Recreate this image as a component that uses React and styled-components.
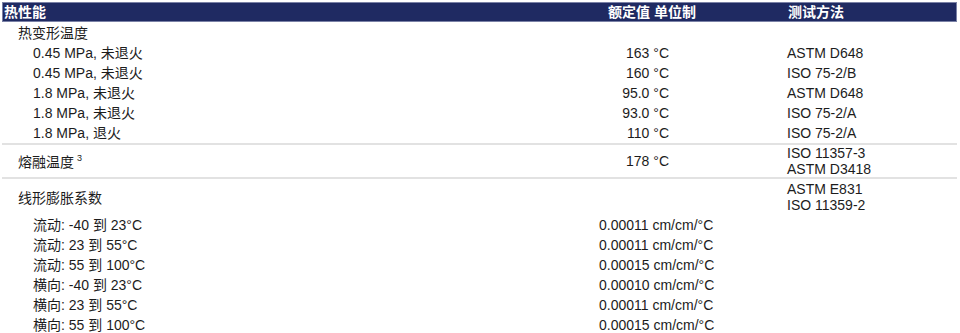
import React from 'react';
import styled, { createGlobalStyle } from 'styled-components';

const GlobalStyle = createGlobalStyle`
  body {
    margin: 0;
    background: #ffffff;
  }
`;

const heatRows = [
  { label: '0.45 MPa, 未退火', value: '163 °C', method: 'ASTM D648' },
  { label: '0.45 MPa, 未退火', value: '160 °C', method: 'ISO 75-2/B' },
  { label: '1.8 MPa, 未退火', value: '95.0 °C', method: 'ASTM D648' },
  { label: '1.8 MPa, 未退火', value: '93.0 °C', method: 'ISO 75-2/A' },
  { label: '1.8 MPa, 退火', value: '110 °C', method: 'ISO 75-2/A' },
];

const cteRows = [
  { label: '流动: -40 到 23°C', value: '0.00011 cm/cm/°C' },
  { label: '流动: 23 到 55°C', value: '0.00011 cm/cm/°C' },
  { label: '流动: 55 到 100°C', value: '0.00015 cm/cm/°C' },
  { label: '横向: -40 到 23°C', value: '0.00010 cm/cm/°C' },
  { label: '横向: 23 到 55°C', value: '0.00011 cm/cm/°C' },
  { label: '横向: 55 到 100°C', value: '0.00015 cm/cm/°C' },
];

function App() {
  return (
    <>
      <GlobalStyle />
      <Table>
        <HeaderRow>
          <HeadCell>热性能</HeadCell>
          <HeadCell $pad="10px">额定值 单位制</HeadCell>
          <HeadCell>测试方法</HeadCell>
        </HeaderRow>

        <Section>
          <Row>
            <Label $indent={16}>热变形温度</Label>
            <Value />
            <Method />
          </Row>
          {heatRows.map((r, i) => (
            <Row key={i}>
              <Label $indent={31}>{r.label}</Label>
              <Value $align="right">{r.value}</Value>
              <Method>{r.method}</Method>
            </Row>
          ))}
        </Section>

        <Section>
          <BlockRow>
            <Label $indent={16}>
              熔融温度<Sup>3</Sup>
            </Label>
            <Value $align="right">178 °C</Value>
            <MethodList>
              <span>ISO 11357-3</span>
              <span>ASTM D3418</span>
            </MethodList>
          </BlockRow>
        </Section>

        <Section $last>
          <BlockRow $height={36}>
            <Label $indent={16}>线形膨胀系数</Label>
            <Value />
            <MethodList>
              <span>ASTM E831</span>
              <span>ISO 11359-2</span>
            </MethodList>
          </BlockRow>
          {cteRows.map((r, i) => (
            <Row key={i}>
              <Label $indent={31}>{r.label}</Label>
              <Value>{r.value}</Value>
              <Method />
            </Row>
          ))}
        </Section>
      </Table>
    </>
  );
}

export default App;

const Table = styled.div`
  margin: 2px 3px 0 2px;
  width: 955px;
  font-family: "Liberation Sans", Arial, "Noto Sans CJK SC", sans-serif;
  font-size: 14px;
  color: #1c1c1c;
`;

const HeaderRow = styled.div`
  display: grid;
  grid-template-columns: 595px 190px 1fr;
  height: 20px;
  box-sizing: border-box;
  align-items: center;
  background: #1f2a62;
  border: 1px solid #7a81a6;
  margin-bottom: 1px;
`;

const HeadCell = styled.div`
  color: #ffffff;
  font-weight: 700;
  font-size: 14px;
  line-height: 18px;
  padding-left: ${(p) => p.$pad || '0'};
  &:first-child {
    padding-left: 1px;
  }
`;

const Section = styled.div`
  display: flex;
  flex-direction: column;
  border-bottom: ${(p) => (p.$last ? 'none' : '2px solid #e2e2e2')};
`;

const Row = styled.div`
  display: grid;
  grid-template-columns: 595px 190px 1fr;
  height: 20px;
  align-items: center;
  line-height: 20px;
`;

const BlockRow = styled.div`
  display: grid;
  grid-template-columns: 595px 190px 1fr;
  height: ${(p) => p.$height || 32}px;
  align-items: center;
`;

const Label = styled.div`
  padding-left: ${(p) => p.$indent}px;
  white-space: nowrap;
`;

const Sup = styled.sup`
  font-size: 9px;
  margin-left: 3px;
  vertical-align: 6px;
  line-height: 0;
`;

const Value = styled.div`
  text-align: ${(p) => (p.$align === 'right' ? 'right' : 'left')};
  padding-right: ${(p) => (p.$align === 'right' ? '118px' : '0')};
  padding-left: ${(p) => (p.$align === 'right' ? '0' : '2px')};
  white-space: nowrap;
`;

const Method = styled.div`
  white-space: nowrap;
`;

const MethodList = styled.div`
  display: flex;
  flex-direction: column;
  line-height: 16px;
  white-space: nowrap;
`;
